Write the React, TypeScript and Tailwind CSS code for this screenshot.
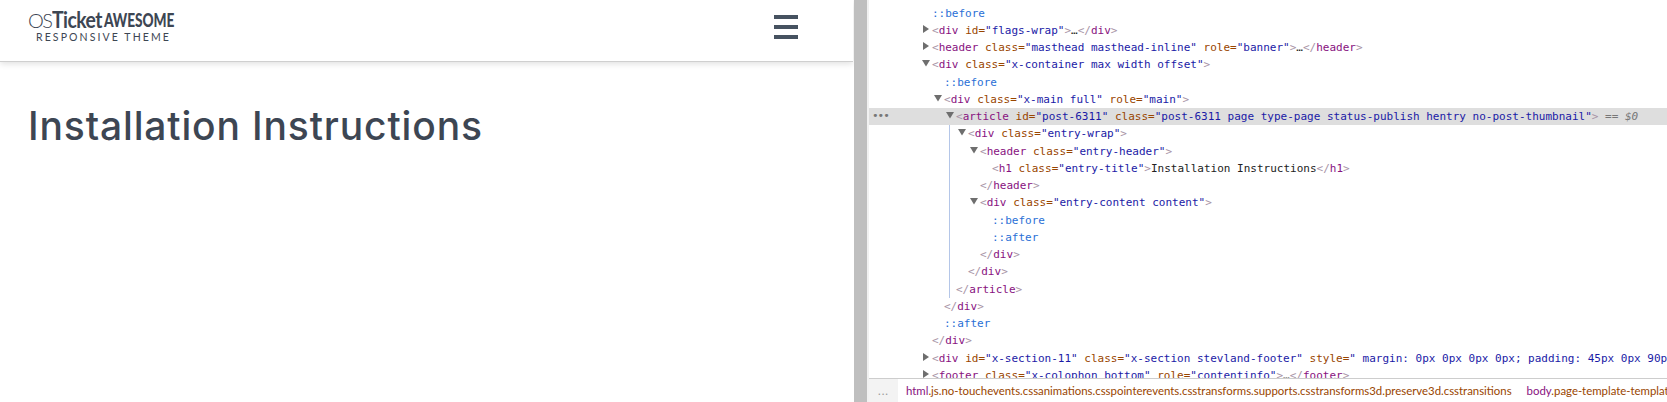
const PURPLE = 'text-[#881280]';

type Attr = [string, string];

function Bracket({ children }: { children: string }) {
  return <span className="text-[#a894a6]">{children}</span>;
}

function Open({ tag, attrs = [] }: { tag: string; attrs?: Attr[] }) {
  return (
    <>
      <Bracket>{'<'}</Bracket>
      <span className={PURPLE}>{tag}</span>
      {attrs.map(([name, value]) => (
        <span key={name}>
          {' '}
          <span className="text-[#994500]">{name}=</span>
          <span className="text-[#1a1aa6]">"{value}"</span>
        </span>
      ))}
      <Bracket>{'>'}</Bracket>
    </>
  );
}

function Close({ tag }: { tag: string }) {
  return (
    <>
      <Bracket>{'</'}</Bracket>
      <span className={PURPLE}>{tag}</span>
      <Bracket>{'>'}</Bracket>
    </>
  );
}

function Pseudo({ name }: { name: string }) {
  return <span className="text-[#2a6fd6]">{name}</span>;
}

function Arrow({ open }: { open: boolean }) {
  return (
    <svg width="8" height="8" viewBox="0 0 8 8" className="absolute left-[-10px] top-[3px]">
      {open ? <path d="M0 1h8L4 7.5z" fill="#6e6e6e" /> : <path d="M1 0l6 4-6 4z" fill="#6e6e6e" />}
    </svg>
  );
}

function Row({
  depth,
  arrow,
  selected,
  children,
}: {
  depth: number;
  arrow?: 'open' | 'closed';
  selected?: boolean;
  children: React.ReactNode;
}) {
  const indent = ['pl-[63px]', 'pl-[75px]', 'pl-[87px]', 'pl-[99px]', 'pl-[111px]', 'pl-[123px]'][depth];
  return (
    <div className={`relative h-[17.25px] leading-[17.25px] whitespace-pre ${indent} ${selected ? 'bg-[#dedede]' : ''}`}>
      {selected && <span className="absolute left-[3px] top-[-1px] tracking-[-1px] text-[#777]">•••</span>}
      <span className="relative inline-block">
        {arrow && <Arrow open={arrow === 'open'} />}
        {children}
      </span>
    </div>
  );
}

export default function App() {
  return (
    <div className="flex h-[402px] w-[1667px] overflow-hidden bg-white">
      {/* Page preview */}
      <div className="w-[853px] shrink-0">
        <header className="flex h-[62px] items-center justify-between border-b border-[#cfcfcf] pb-[8px] pl-[28px] pr-[55px] shadow-[0_2px_6px_rgba(0,0,0,0.12)]">
          <div className="font-['Lato',sans-serif] text-[#3d4653]">
            <div className="flex h-[18px] items-center whitespace-nowrap leading-none">
              <span className="w-[24px] text-[20px] font-light tracking-[-1.5px]">OS</span>
              <span className="inline-block w-[49px] origin-left scale-x-[0.88] text-[22px] font-bold tracking-[-0.6px]">Ticket</span>
              <span className="ml-[3px] inline-block w-[74px] origin-left scale-x-[0.76] text-[18px] font-black tracking-[-0.1px]">AWESOME</span>
            </div>
            <div className="ml-[8px] mt-[3px] text-[10.5px] leading-[11px] tracking-[2.1px]">RESPONSIVE THEME</div>
          </div>
          <div className="flex w-[24px] flex-col gap-[6px]">
            <div className="h-[4px] bg-[#465260]" />
            <div className="h-[4px] bg-[#465260]" />
            <div className="h-[4px] bg-[#465260]" />
          </div>
        </header>
        <h1 className="ml-[28px] mt-[40px] font-['Inter',sans-serif] text-[39px] font-medium leading-[48px] tracking-[0.85px] text-[#3d4653]">
          Installation Instructions
        </h1>
      </div>

      {/* Splitter */}
      <div className="ml-[1px] w-[13px] shrink-0 bg-[#bfbfbf]" />

      {/* DevTools elements panel */}
      <div className="flex min-w-0 flex-1 flex-col border-l-[2px] border-[#f1f1f1]">
        <div className="relative h-[378px] shrink-0 overflow-hidden font-['DejaVu_Sans_Mono',monospace] text-[11px] text-[#222]">
          <div className="mt-[4.5px]">
            <Row depth={0}><Pseudo name="::before" /></Row>
            <Row depth={0} arrow="closed">
              <Open tag="div" attrs={[['id', 'flags-wrap']]} />…<Close tag="div" />
            </Row>
            <Row depth={0} arrow="closed">
              <Open tag="header" attrs={[['class', 'masthead masthead-inline'], ['role', 'banner']]} />…<Close tag="header" />
            </Row>
            <Row depth={0} arrow="open">
              <Open tag="div" attrs={[['class', 'x-container max width offset']]} />
            </Row>
            <Row depth={1}><Pseudo name="::before" /></Row>
            <Row depth={1} arrow="open">
              <Open tag="div" attrs={[['class', 'x-main full'], ['role', 'main']]} />
            </Row>
            <Row depth={2} arrow="open" selected>
              <Open tag="article" attrs={[['id', 'post-6311'], ['class', 'post-6311 page type-page status-publish hentry no-post-thumbnail']]} />
              <span className="text-[#777]"> == </span>
              <span className="italic text-[#777]">$0</span>
            </Row>
            <Row depth={3} arrow="open"><Open tag="div" attrs={[['class', 'entry-wrap']]} /></Row>
            <Row depth={4} arrow="open"><Open tag="header" attrs={[['class', 'entry-header']]} /></Row>
            <Row depth={5}>
              <Open tag="h1" attrs={[['class', 'entry-title']]} />Installation Instructions<Close tag="h1" />
            </Row>
            <Row depth={4}><Close tag="header" /></Row>
            <Row depth={4} arrow="open"><Open tag="div" attrs={[['class', 'entry-content content']]} /></Row>
            <Row depth={5}><Pseudo name="::before" /></Row>
            <Row depth={5}><Pseudo name="::after" /></Row>
            <Row depth={4}><Close tag="div" /></Row>
            <Row depth={3}><Close tag="div" /></Row>
            <Row depth={2}><Close tag="article" /></Row>
            <Row depth={1}><Close tag="div" /></Row>
            <Row depth={1}><Pseudo name="::after" /></Row>
            <Row depth={0}><Close tag="div" /></Row>
            <Row depth={0} arrow="closed">
              <Open tag="div" attrs={[['id', 'x-section-11'], ['class', 'x-section stevland-footer'], ['style', ' margin: 0px 0px 0px 0px; padding: 45px 0px 90px 0px;']]} />
            </Row>
            <Row depth={0} arrow="closed">
              <Open tag="footer" attrs={[['class', 'x-colophon bottom'], ['role', 'contentinfo']]} />…<Close tag="footer" />
            </Row>
          </div>
          {/* Selected node guide line */}
          <div className="absolute left-[80px] top-[125px] h-[173px] w-px bg-[#b4c6e8]" />
        </div>

        {/* Breadcrumb bar */}
        <div className="flex h-[24px] items-center overflow-hidden whitespace-nowrap border-t border-[#cdcdcd] font-['Lato',sans-serif] text-[11.4px]">
          <div className="flex h-full w-[29px] shrink-0 items-center justify-center bg-[#f3f3f3] tracking-[1px] text-[#999]">...</div>
          <div className="pl-[8px]">
            <span className="text-[#881280]">html</span>
            <span className="text-[#994500]">.js.no-touchevents.cssanimations.csspointerevents.csstransforms.supports.csstransforms3d.preserve3d.csstransitions</span>
            <span className="ml-[15px] text-[#881280]">body</span>
            <span className="text-[#994500]">.page-template-template-blank</span>
          </div>
        </div>
      </div>
    </div>
  );
}
